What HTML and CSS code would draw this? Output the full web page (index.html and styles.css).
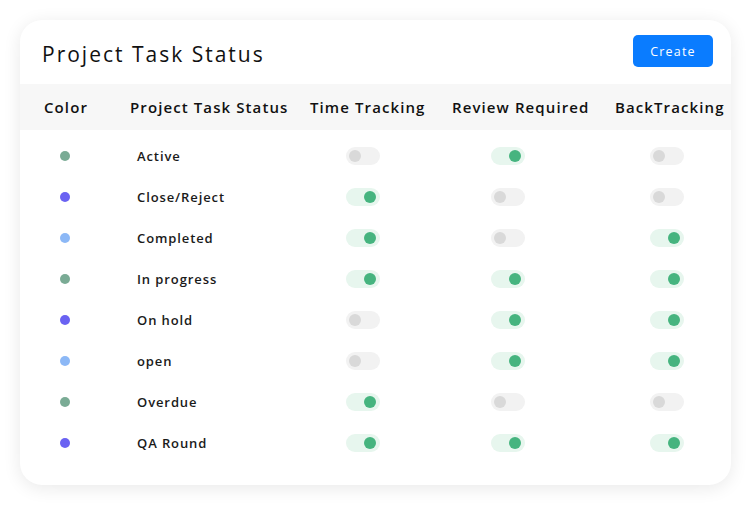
FILE: index.html
```html
<!DOCTYPE html>
<html>
<head>
<meta charset="utf-8">
<link rel="stylesheet" href="styles.css">
</head>
<body>
<div class="card">
  <div class="top">
    <h1 class="title">Project Task Status</h1>
    <button class="create">Create</button>
  </div>
  <div class="grid head">
    <div class="h h-color">Color</div>
    <div class="h h-status">Project Task Status</div>
    <div class="h h-time">Time Tracking</div>
    <div class="h h-review">Review Required</div>
    <div class="h h-back">BackTracking</div>
  </div>
  <div class="rows">
    <div class="grid row"><div class="c-color"><span class="dot green"></span></div><div class="c-status">Active</div><div class="c-time"><span class="tg"></span></div><div class="c-review"><span class="tg on"></span></div><div class="c-back"><span class="tg"></span></div></div>
    <div class="grid row"><div class="c-color"><span class="dot purple"></span></div><div class="c-status">Close/Reject</div><div class="c-time"><span class="tg on"></span></div><div class="c-review"><span class="tg"></span></div><div class="c-back"><span class="tg"></span></div></div>
    <div class="grid row"><div class="c-color"><span class="dot blue"></span></div><div class="c-status">Completed</div><div class="c-time"><span class="tg on"></span></div><div class="c-review"><span class="tg"></span></div><div class="c-back"><span class="tg on"></span></div></div>
    <div class="grid row"><div class="c-color"><span class="dot green"></span></div><div class="c-status">In progress</div><div class="c-time"><span class="tg on"></span></div><div class="c-review"><span class="tg on"></span></div><div class="c-back"><span class="tg on"></span></div></div>
    <div class="grid row"><div class="c-color"><span class="dot purple"></span></div><div class="c-status">On hold</div><div class="c-time"><span class="tg"></span></div><div class="c-review"><span class="tg on"></span></div><div class="c-back"><span class="tg on"></span></div></div>
    <div class="grid row"><div class="c-color"><span class="dot blue"></span></div><div class="c-status">open</div><div class="c-time"><span class="tg"></span></div><div class="c-review"><span class="tg on"></span></div><div class="c-back"><span class="tg on"></span></div></div>
    <div class="grid row"><div class="c-color"><span class="dot green"></span></div><div class="c-status">Overdue</div><div class="c-time"><span class="tg on"></span></div><div class="c-review"><span class="tg"></span></div><div class="c-back"><span class="tg"></span></div></div>
    <div class="grid row"><div class="c-color"><span class="dot purple"></span></div><div class="c-status">QA Round</div><div class="c-time"><span class="tg on"></span></div><div class="c-review"><span class="tg on"></span></div><div class="c-back"><span class="tg on"></span></div></div>
  </div>
</div>
</body>
</html>
```
FILE: styles.css
```css
* { box-sizing: border-box; }
html, body { margin: 0; padding: 0; background: #ffffff; }
body {
  padding: 20px 20px 21px 20px;
  min-height: 506px;
  font-family: "Open Sans", "Liberation Sans", sans-serif;
  color: #111;
}
.card {
  width: 711px;
  height: 465px;
  background: #fff;
  border-radius: 22px;
  box-shadow: 0 3px 18px rgba(0, 0, 0, 0.09);
  overflow: hidden;
}
.top {
  display: flex;
  align-items: center;
  justify-content: space-between;
  height: 64px;
  padding: 0 18px 0 22px;
}
.title {
  margin: 4px 0 0 0;
  font-size: 21px;
  font-weight: 500;
  letter-spacing: 2px;
  color: #111;
}
.create {
  width: 80px;
  height: 32px;
  margin-top: -2px;
  border: none;
  border-radius: 5px;
  background: #0a7cff;
  color: #fff;
  font-family: inherit;
  font-size: 12.5px;
  letter-spacing: 1.2px;
}
.grid {
  display: grid;
  grid-template-columns: 90px 188px 140px 165px 128px;
  align-items: center;
}
.head {
  height: 46px;
  background: #f7f7f7;
  font-size: 15px;
  font-weight: 600;
  letter-spacing: 1.1px;
  white-space: nowrap;
}
.h-color { padding-left: 24px; }
.h-status { padding-left: 20px; }
.h-time { padding-left: 12px; }
.h-review { padding-left: 14px; }
.h-back { padding-left: 12px; }
.rows { padding-top: 5px; }
.row {
  height: 41px;
  font-size: 13px;
  font-weight: 600;
  letter-spacing: 0.9px;
  color: #1a1a1a;
}
.c-color { padding-left: 40px; display: flex; }
.c-status { padding-left: 27px; }
.c-time { padding-left: 48px; display: flex; }
.c-review { padding-left: 53px; display: flex; }
.c-back { padding-left: 47px; display: flex; }
.dot {
  width: 10px;
  height: 10px;
  border-radius: 50%;
  display: block;
}
.green { background: #7aab95; }
.purple { background: #6a62f2; }
.blue { background: #8cb8f6; }
.tg {
  position: relative;
  display: block;
  width: 34px;
  height: 18px;
  border-radius: 9px;
  background: #f2f2f2;
}
.tg::after {
  content: "";
  position: absolute;
  left: 3px;
  top: 3px;
  width: 12px;
  height: 12px;
  border-radius: 50%;
  background: #d9d9d9;
}
.tg.on { background: #e7f6ee; }
.tg.on::after { left: auto; right: 4px; background: #46b47f; }
```
